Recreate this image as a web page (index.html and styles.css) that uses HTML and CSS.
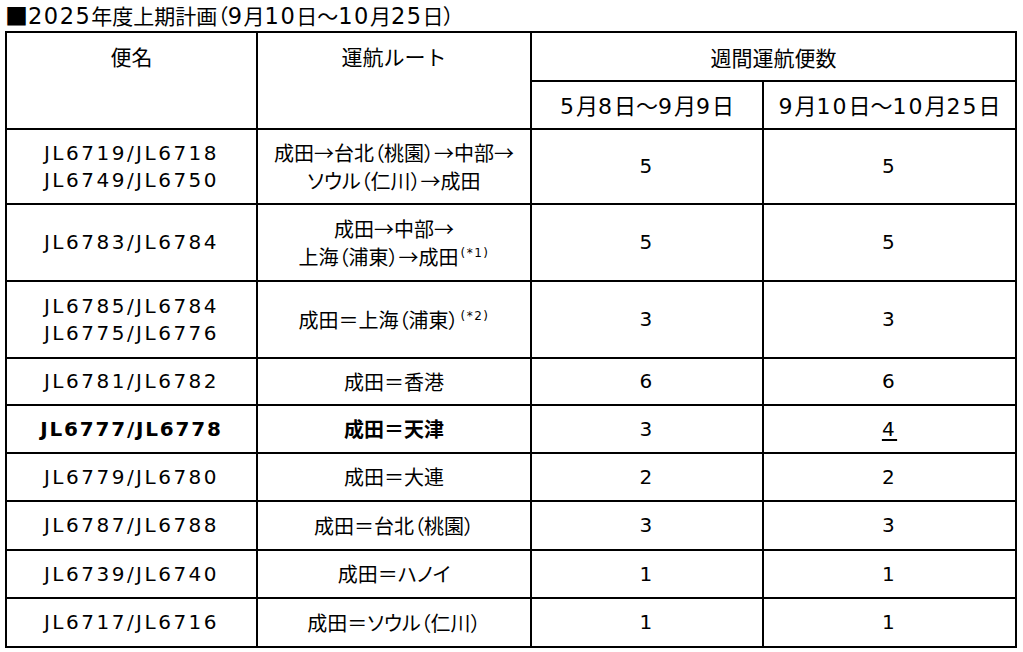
FILE: index.html
```html
<!DOCTYPE html>
<html lang="ja">
<head>
<meta charset="utf-8">
<title>2025年度上期計画</title>
<link rel="stylesheet" href="styles.css">
</head>
<body>
<div class="title"><span class="sq">■</span><span class="n">2025</span>年度上期計画（<span class="n">9</span>月<span class="n">10</span>日～<span class="n">10</span>月<span class="n">25</span>日）</div>
<table class="plan">
  <colgroup>
    <col class="c1"><col class="c2"><col class="c3"><col class="c4">
  </colgroup>
  <thead>
    <tr class="ha">
      <th rowspan="2" class="top">便名</th>
      <th rowspan="2" class="top">運航ルート</th>
      <th colspan="2">週間運航便数</th>
    </tr>
    <tr class="hb">
      <th class="date"><span class="n">5</span>月<span class="n">8</span>日～<span class="n">9</span>月<span class="n">9</span>日</th>
      <th class="date"><span class="n">9</span>月<span class="n">10</span>日～<span class="n">10</span>月<span class="n">25</span>日</th>
    </tr>
  </thead>
  <tbody>
    <tr class="r75">
      <td class="flt">JL6719/JL6718<br>JL6749/JL6750</td>
      <td class="route loose">成田→台北（桃園）→中部→<br>ソウル（仁川）→成田</td>
      <td class="cnt">5</td>
      <td class="cnt">5</td>
    </tr>
    <tr class="r77">
      <td class="flt">JL6783/JL6784</td>
      <td class="route loose">成田→中部→<br>上海（浦東）→成田<sup class="note">(*1)</sup></td>
      <td class="cnt">5</td>
      <td class="cnt">5</td>
    </tr>
    <tr class="r77">
      <td class="flt">JL6785/JL6784<br>JL6775/JL6776</td>
      <td class="route">成田＝上海（浦東）<sup class="note">(*2)</sup></td>
      <td class="cnt">3</td>
      <td class="cnt">3</td>
    </tr>
    <tr class="r47">
      <td class="flt">JL6781/JL6782</td>
      <td class="route">成田＝香港</td>
      <td class="cnt">6</td>
      <td class="cnt">6</td>
    </tr>
    <tr class="r48 bold">
      <td class="flt">JL6777/JL6778</td>
      <td class="route">成田＝天津</td>
      <td class="cnt">3</td>
      <td class="cnt"><span class="u">4</span></td>
    </tr>
    <tr class="r48">
      <td class="flt">JL6779/JL6780</td>
      <td class="route">成田＝大連</td>
      <td class="cnt">2</td>
      <td class="cnt">2</td>
    </tr>
    <tr class="r49">
      <td class="flt">JL6787/JL6788</td>
      <td class="route">成田＝台北（桃園）</td>
      <td class="cnt">3</td>
      <td class="cnt">3</td>
    </tr>
    <tr class="r48">
      <td class="flt">JL6739/JL6740</td>
      <td class="route">成田＝ハノイ</td>
      <td class="cnt">1</td>
      <td class="cnt">1</td>
    </tr>
    <tr class="r49">
      <td class="flt">JL6717/JL6716</td>
      <td class="route">成田＝ソウル（仁川）</td>
      <td class="cnt">1</td>
      <td class="cnt">1</td>
    </tr>
  </tbody>
</table>
</body>
</html>
```
FILE: styles.css
```css
html, body {
  margin: 0;
  padding: 0;
  background: #fff;
  color: #000;
}

body {
  padding: 0 5px;
  font-family: "Noto Sans CJK JP", "Noto Sans", sans-serif;
}

.n {
  font-family: "DejaVu Sans", sans-serif;
  letter-spacing: 2.5px;
}

.title {
  font-size: 21px;
  line-height: 31px;
  height: 31px;
  white-space: nowrap;
  font-feature-settings: "palt";
}

.title .sq {
  font-size: 23px;
  line-height: 0;
  vertical-align: -1px;
}

.title .n {
  font-size: 22.5px;
  letter-spacing: 1.5px;
}

.plan {
  border-collapse: collapse;
  table-layout: fixed;
  width: 1012px;
}

.c1 { width: 251px; }
.c2 { width: 274px; }
.c3 { width: 232px; }
.c4 { width: 253px; }

.plan th,
.plan td {
  border: 2px solid #000;
  padding: 0;
  text-align: center;
  vertical-align: middle;
  font-weight: normal;
}

.plan th {
  font-size: 21px;
  line-height: 28px;
}

.plan th.top {
  vertical-align: top;
  padding-top: 9px;
}

.plan th.date {
  font-size: 22px;
}

.plan th.date .n {
  letter-spacing: 2px;
}

.ha { height: 49px; }
.hb { height: 48px; }
.r75 { height: 75px; }
.r77 { height: 77px; }
.r47 { height: 47px; }
.r48 { height: 48px; }
.r49 { height: 49px; }

.flt,
.cnt {
  font-family: "DejaVu Sans", sans-serif;
  font-size: 20px;
  letter-spacing: 2.5px;
  line-height: 27px;
}

.route {
  font-size: 20px;
  line-height: 26px;
  font-feature-settings: "palt";
}

.route.loose { line-height: 28px; }

.note {
  font-family: "DejaVu Sans", sans-serif;
  font-size: 12px;
  line-height: 1;
  letter-spacing: 1.5px;
  vertical-align: 8px;
  margin-left: 2px;
}

.bold .flt,
.bold .route {
  font-weight: bold;
}

.bold .flt {
  letter-spacing: 1.8px;
}

.u {
  text-decoration: underline;
  text-decoration-thickness: 1.5px;
  text-underline-offset: 3px;
}
```
